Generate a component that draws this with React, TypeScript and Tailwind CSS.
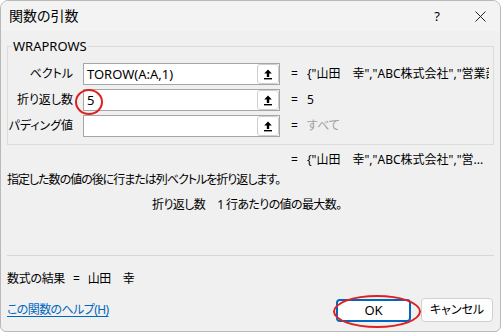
import { Fragment } from 'react'

const font = "font-['Noto_Sans','Noto_Sans_CJK_JP',sans-serif] [font-feature-settings:'palt']"

const args = [
  { label: 'ベクトル', value: 'TOROW(A:A,1)', result: '{"山田　幸","ABC株式会社","営業部"}', muted: false },
  { label: '折り返し数', value: '5', result: '5', muted: false },
  { label: 'パディング値', value: '', result: 'すべて', muted: true },
]

function RefIcon() {
  return (
    <svg width="12" height="12" viewBox="0 0 12 12">
      <path d="M6 1.5 L2.2 5.6 H4.8 V9 H7.2 V5.6 H9.8 Z" fill="#000" />
      <rect x="2" y="10" width="8" height="1.4" fill="#000" />
    </svg>
  )
}

export default function App() {
  return (
    <div className={`h-[334px] w-[504px] bg-white text-[12px] text-black ${font}`}>
      <div className="relative flex h-[332px] w-[501px] flex-col overflow-hidden rounded-t-[8px] rounded-b-[6px] border border-[#b9b9b9] bg-[#f0f0f0]">
        {/* Title bar */}
        <div className="flex h-[30px] shrink-0 items-center bg-[#f3f3f3] pl-[8px] pr-[14px]">
          <span className="flex-1 text-[14px] leading-none">関数の引数</span>
          <span className="mr-[35px] text-[13px] leading-none">?</span>
          <svg width="11" height="11" viewBox="0 0 11 11">
            <path d="M0.5 0.5 L10.5 10.5 M10.5 0.5 L0.5 10.5" stroke="#222" strokeWidth="1" />
          </svg>
        </div>

        <div className="flex flex-1 flex-col px-[6px] pt-[7px]">
          {/* Argument group */}
          <fieldset className="border border-[#dcdcdc] px-0 pb-[7px]">
            <legend className="ml-[4px] px-[1px] text-[13px] leading-[16px]">WRAPROWS</legend>
            <div className="flex flex-col gap-[4px] pt-[9px]">
              {args.map((a) => (
                <div key={a.label} className="flex h-[22px] items-center">
                  <span className="w-[65px] shrink-0 text-right leading-none">{a.label}</span>
                  <div className="ml-[10px] flex h-[22px] w-[197px] items-center border border-[#a5a5a5] bg-white pl-[3px]">
                    <span className="flex-1 text-[13px] leading-none">{a.value}</span>
                    <div className="flex h-[20px] w-[22px] items-center justify-center rounded-[3px] border border-[#cfcfcf] bg-white">
                      <RefIcon />
                    </div>
                  </div>
                  <span className="ml-[11px] w-[16px] shrink-0">=</span>
                  <span
                    className={`w-[182px] overflow-hidden whitespace-nowrap leading-[18px] ${a.muted ? 'text-[#a0a0a0]' : ''}`}
                  >
                    {a.result}
                  </span>
                </div>
              ))}
            </div>
          </fieldset>

          {/* Overall result */}
          <div className="mt-[7px] flex h-[16px] items-center pl-[284px]">
            <span className="w-[16px]">=</span>
            <span className="whitespace-nowrap">{'{"山田　幸","ABC株式会社","営...'}</span>
          </div>

          <p className="mt-[4px] h-[16px] leading-[16px] tracking-[-1px]">
            指定した数の値の後に行または列ベクトルを折り返します。
          </p>

          <div className="mt-[9px] flex h-[16px] items-center pl-[145px] leading-[16px] tracking-[-0.6px]">
            <span>折り返し数</span>
            <span className="ml-[12px]">1 行あたりの値の最大数。</span>
          </div>

          <div className="mt-[42px] border-t border-[#d6d6d6]" />

          <div className="mt-[15px] flex h-[16px] items-center leading-[16px] tracking-[-0.3px]">
            {['数式の結果', '=', '山田　幸'].map((t, i) => (
              <Fragment key={t}>
                {i > 0 && <span className="w-[8px]" />}
                <span>{t}</span>
              </Fragment>
            ))}
          </div>

          {/* Footer */}
          <div className="mt-[11px] flex items-center">
            <div className="flex-1">
              <a href="#" className="text-[#0067c0] underline underline-offset-[2px] tracking-[-0.6px]">
                この関数のヘルプ(H)
              </a>
            </div>
            <button className="h-[23px] w-[75px] rounded-[4px] border-2 border-[#0067c0] bg-white text-[13px]">OK</button>
            <button className="ml-[10px] mr-[1px] h-[24px] w-[72px] rounded-[4px] border border-[#d0d0d0] bg-[#fdfdfd]">
              キャンセル
            </button>
          </div>
        </div>

        {/* Red annotation ellipses */}
        <div className="absolute left-[74px] top-[88px] h-[26px] w-[28px] rounded-[50%] border-2 border-[#e02020]" />
        <div className="absolute left-[332px] top-[294px] h-[33px] w-[88px] rounded-[50%] border-2 border-[#e02020]" />
      </div>
    </div>
  )
}
